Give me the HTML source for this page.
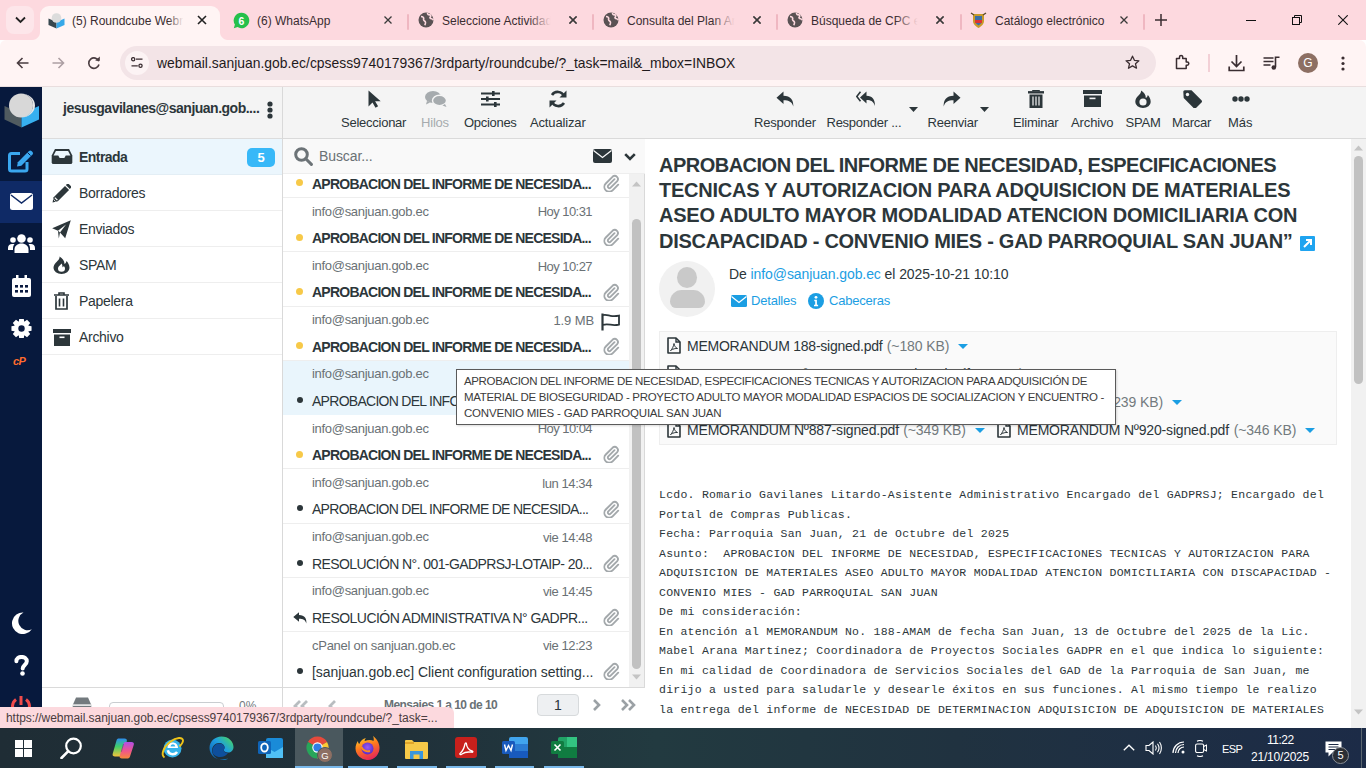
<!DOCTYPE html>
<html><head><meta charset="utf-8">
<style>
*{box-sizing:border-box;margin:0;padding:0}
html,body{width:1366px;height:768px;overflow:hidden;background:#fff;font-family:"Liberation Sans",sans-serif;color:#2c363a}
.a{position:absolute}
svg{display:block}
/* chrome */
#tabs{left:0;top:0;width:1366px;height:40px;background:#fdd9df}
.tab{top:6px;height:34px;width:185px;font-size:13px;color:#3b2c30}
.tab .t{position:absolute;left:32px;top:8px;white-space:nowrap;overflow:hidden;width:128px}
.tab .x{position:absolute;left:158px;top:9px}
#toolbar{left:0;top:40px;width:1366px;height:47px;background:#fff4f4;border-bottom:1px solid #e9dede;border-top-right-radius:7px;border-top-left-radius:6px}
#pill{left:120px;top:6px;width:1036px;height:34px;border-radius:17px;background:#f3e4e7}
#url{left:157px;top:15px;font-size:13.9px;color:#1f1a1c;white-space:nowrap}
.tt{top:14px;font-size:12px;color:#3a2d31;white-space:nowrap}
.tx{top:15px;width:10px;height:10px}
.sep{top:14px;width:2px;height:16px;background:#efb7c1;border-radius:1px}
.gl{top:12px;width:16px;height:16px}
.tbl{top:28px;font-size:13px;color:#2c363a;white-space:nowrap}
.row{left:0;width:346px;height:54.25px;border-bottom:1px solid #eeeeee;background:#fff}
.row.sel{background:#e9f5fc;border-bottom-color:#e9f5fc}
.from{left:29px;font-size:13px;color:#6a7175;letter-spacing:-0.3px;white-space:nowrap}
.date{right:37px;font-size:13px;color:#6a7175;letter-spacing:-0.55px;white-space:nowrap}
.subj{left:29px;font-size:14px;color:#2c363a;white-space:nowrap}
.dot{width:7px;height:7px;border-radius:50%}
/* app */
#side{left:0;top:87px;width:42px;height:641px;background:#07193d}
#fhead{left:42px;top:87px;width:240px;height:52px;background:#f4f4f4;border-bottom:1px solid #dcdcdc}
#fpanel{left:42px;top:87px;width:241px;height:641px;background:#fff;border-right:1px solid #d9d9d9}
#lpanel{left:283px;top:87px;width:362px;height:641px;background:#fff;border-right:1px solid #d9d9d9}
#cpanel{left:645px;top:87px;width:721px;height:641px;background:#fff}
.hdr{background:#f4f4f4;border-bottom:1px solid #dadada}
.folder{left:0;width:240px;height:36px;border-bottom:1px solid #eee;font-size:14px;letter-spacing:-0.3px;color:#2c363a}
.folder span{position:absolute;left:37px;top:10px}
.folder svg{position:absolute;left:9px;top:9px}
#status{left:0;top:707px;width:454px;height:21px;background:#fcd9de;border-top-right-radius:6px;font-size:12px;letter-spacing:-0.05px;color:#4a3c40;padding:4px 0 0 6px;white-space:nowrap}
#taskbar{left:0;top:728px;width:1366px;height:40px;background:linear-gradient(90deg,#1f2d35 0%,#20313a 30%,#223a40 48%,#203240 70%,#1c2b47 100%)}
</style></head><body>
<div id="tabs" class="a">
  <div class="a" style="left:6px;top:6px;width:28px;height:28px;border-radius:8px;background:#fde6ea"></div>
  <svg class="a" style="left:15px;top:16px" width="11" height="8" viewBox="0 0 11 8"><path d="M1 1.5 L5.5 6 L10 1.5" stroke="#222" stroke-width="1.8" fill="none"/></svg>
  <div class="a" style="left:40px;top:6px;width:180px;height:34px;background:#fff4f4;border-radius:9px 9px 0 0"></div>
  <div class="a" style="left:32px;top:32px;width:8px;height:8px;background:radial-gradient(circle at 0 0,#fdd9df 7.5px,#fff4f4 8.5px)"></div>
  <div class="a" style="left:220px;top:32px;width:8px;height:8px;background:radial-gradient(circle at 100% 0,#fdd9df 7.5px,#fff4f4 8.5px)"></div>
  <!-- roundcube icon -->
  <svg class="a" style="left:48px;top:12px" width="17" height="17" viewBox="0 0 17 17"><path d="M0.5 6.5 L8.5 10 L8.5 16.5 L0.5 13 Z" fill="#37474f"/><path d="M8.5 10 L16.5 6.5 L16.5 13 L8.5 16.5 Z" fill="#37a8e8"/><circle cx="8.5" cy="6" r="4.8" fill="#dcdcdc"/><path d="M0.5 6.5 L4 8 L8.5 10 L13 8 L16.5 6.5" fill="none"/></svg>
  <div class="a tt" style="left:72px">(5) Roundcube Webm</div>
  <div class="a" style="left:168px;top:10px;width:22px;height:20px;background:linear-gradient(90deg,rgba(255,244,244,0),#fff4f4 70%)"></div>
  <svg class="a tx" style="left:197px"><path d="M1 1L9 9M9 1L1 9" stroke="#222" stroke-width="1.6"/></svg>
  <!-- whatsapp -->
  <svg class="a" style="left:233px;top:12px" width="17" height="17" viewBox="0 0 17 17"><path d="M8.5 0.8a7.7 7.7 0 1 1-3.9 14.3L0.8 16.2l1.1-3.6A7.7 7.7 0 0 1 8.5 0.8z" fill="#25c04a"/><text x="8.5" y="12.5" font-size="10.5" font-weight="bold" text-anchor="middle" fill="#fff" font-family="Liberation Sans">6</text></svg>
  <div class="a tt" style="left:257px">(6) WhatsApp</div>
  <svg class="a tx" style="left:383px"><path d="M1.5 1.5L8.5 8.5M8.5 1.5L1.5 8.5" stroke="#3a3a3a" stroke-width="1.3"/></svg>
  <div class="a sep" style="left:407px"></div>
  <svg class="a gl" style="left:418px"><circle cx="8" cy="8" r="7.5" fill="#5a5254"/><path d="M3 4.5c2 0 3 1 2.6 2.6-.4 1.2.8 1.8 1.6 2.4.8.8.2 2.2-.4 3.8M9.5 1c0 1.5 1 2 2.5 1.8 1 .2 1 1.5.3 2.2-.8.8.2 1.6 1.2 1.8 1 .2 1.6.8 1.8 1.5" stroke="#fdd9df" stroke-width="1.6" fill="none"/></svg>
  <div class="a tt" style="left:442px">Seleccione Actividad a</div>
  <svg class="a tx" style="left:568px"><path d="M1.5 1.5L8.5 8.5M8.5 1.5L1.5 8.5" stroke="#3a3a3a" stroke-width="1.3"/></svg>
  <div class="a sep" style="left:592px"></div>
  <svg class="a gl" style="left:603px"><circle cx="8" cy="8" r="7.5" fill="#5a5254"/><path d="M3 4.5c2 0 3 1 2.6 2.6-.4 1.2.8 1.8 1.6 2.4.8.8.2 2.2-.4 3.8M9.5 1c0 1.5 1 2 2.5 1.8 1 .2 1 1.5.3 2.2-.8.8.2 1.6 1.2 1.8 1 .2 1.6.8 1.8 1.5" stroke="#fdd9df" stroke-width="1.6" fill="none"/></svg>
  <div class="a tt" style="left:627px">Consulta del Plan Anu</div>
  <svg class="a tx" style="left:752px"><path d="M1.5 1.5L8.5 8.5M8.5 1.5L1.5 8.5" stroke="#3a3a3a" stroke-width="1.3"/></svg>
  <div class="a sep" style="left:776px"></div>
  <svg class="a gl" style="left:787px"><circle cx="8" cy="8" r="7.5" fill="#5a5254"/><path d="M3 4.5c2 0 3 1 2.6 2.6-.4 1.2.8 1.8 1.6 2.4.8.8.2 2.2-.4 3.8M9.5 1c0 1.5 1 2 2.5 1.8 1 .2 1 1.5.3 2.2-.8.8.2 1.6 1.2 1.8 1 .2 1.6.8 1.8 1.5" stroke="#fdd9df" stroke-width="1.6" fill="none"/></svg>
  <div class="a tt" style="left:811px">Búsqueda de CPC en</div>
  <svg class="a tx" style="left:935px"><path d="M1.5 1.5L8.5 8.5M8.5 1.5L1.5 8.5" stroke="#3a3a3a" stroke-width="1.3"/></svg>
  <div class="a sep" style="left:960px"></div>
  <svg class="a" style="left:970px;top:11px" width="17" height="18" viewBox="0 0 17 18"><path d="M3 3h11v7c0 3.5-3 5.5-5.5 7C6 15.5 3 13.5 3 10z" fill="#c79a2a"/><path d="M5 5h7v5c0 2-1.8 3.4-3.5 4.4C6.8 13.4 5 12 5 10z" fill="#3b6ea5"/><rect x="5" y="9" width="7" height="3" fill="#d33"/><path d="M1 2l3 2M16 2l-3 2" stroke="#5a4a2a" stroke-width="1.4"/></svg>
  <div class="a tt" style="left:995px">Catálogo electrónico</div>
  <svg class="a tx" style="left:1119px"><path d="M1.5 1.5L8.5 8.5M8.5 1.5L1.5 8.5" stroke="#3a3a3a" stroke-width="1.3"/></svg>
  <div class="a sep" style="left:1143px"></div>
  <div class="a" style="left:528px;top:10px;width:38px;height:22px;background:linear-gradient(90deg,rgba(253,217,223,0),#fdd9df 60%)"></div>
  <div class="a" style="left:712px;top:10px;width:38px;height:22px;background:linear-gradient(90deg,rgba(253,217,223,0),#fdd9df 60%)"></div>
  <div class="a" style="left:895px;top:10px;width:38px;height:22px;background:linear-gradient(90deg,rgba(253,217,223,0),#fdd9df 60%)"></div>
  <svg class="a tx" style="left:568px"><path d="M1.5 1.5L8.5 8.5M8.5 1.5L1.5 8.5" stroke="#3a3a3a" stroke-width="1.3"/></svg>
  <svg class="a tx" style="left:752px"><path d="M1.5 1.5L8.5 8.5M8.5 1.5L1.5 8.5" stroke="#3a3a3a" stroke-width="1.3"/></svg>
  <svg class="a tx" style="left:935px"><path d="M1.5 1.5L8.5 8.5M8.5 1.5L1.5 8.5" stroke="#3a3a3a" stroke-width="1.3"/></svg>
  <svg class="a" style="left:1154px;top:13px" width="14" height="14" viewBox="0 0 14 14"><path d="M7 1v12M1 7h12" stroke="#3a2d31" stroke-width="1.5"/></svg>
  <svg class="a" style="left:1246px;top:20px" width="10" height="1" viewBox="0 0 10 1"><path d="M0 0.5h10" stroke="#111" stroke-width="1"/></svg>
  <svg class="a" style="left:1292px;top:15px" width="10" height="10" viewBox="0 0 10 10"><rect x="0.5" y="2.5" width="7" height="7" fill="none" stroke="#111" stroke-width="1"/><path d="M2.5 2.5V0.5h7v7h-2" fill="none" stroke="#111" stroke-width="1"/></svg>
  <svg class="a" style="left:1338px;top:15px" width="10" height="10" viewBox="0 0 10 10"><path d="M0.3 0.3l9.4 9.4M9.7 0.3l-9.4 9.4" stroke="#111" stroke-width="1.1"/></svg>
</div>
<div id="toolbar" class="a">
  <div id="pill" class="a"></div>
  <svg class="a" style="left:16px;top:17px" width="13" height="12" viewBox="0 0 13 12"><path d="M12.5 6H1.5M6.5 1L1.5 6l5 5" stroke="#4a3c40" stroke-width="1.6" fill="none"/></svg>
  <svg class="a" style="left:52px;top:17px" width="13" height="12" viewBox="0 0 13 12"><path d="M0.5 6H11.5M6.5 1l5 5-5 5" stroke="#ad9fa3" stroke-width="1.6" fill="none"/></svg>
  <svg class="a" style="left:87px;top:16px" width="14" height="14" viewBox="0 0 14 14"><path d="M11.8 5.2A5.2 5.2 0 1 0 12 8.5" stroke="#4a3c40" stroke-width="1.6" fill="none"/><path d="M8.2 4.8h4.6V0.5z" fill="#4a3c40"/></svg>
  <div class="a" style="left:125px;top:11px;width:24px;height:24px;border-radius:12px;background:#fcf3f4"></div>
  <svg class="a" style="left:131px;top:17px" width="12" height="12" viewBox="0 0 12 12"><circle cx="2.2" cy="2.2" r="1.6" stroke="#3a2d31" stroke-width="1.3" fill="none"/><path d="M5 2.2h6.5M0.5 8.8h6.3" stroke="#3a2d31" stroke-width="1.3"/><circle cx="9.5" cy="8.8" r="1.6" stroke="#3a2d31" stroke-width="1.3" fill="none"/></svg>
  <svg class="a" style="left:1125px;top:15px" width="15" height="15" viewBox="0 0 15 15"><path d="M7.5 1.2l1.9 4.1 4.5.5-3.4 3 1 4.4-4-2.3-4 2.3 1-4.4-3.4-3 4.5-.5z" stroke="#3a2d31" stroke-width="1.3" fill="none" stroke-linejoin="round"/></svg>
  <svg class="a" style="left:1175px;top:14px" width="16" height="16" viewBox="0 0 16 16"><path d="M1.5 4.5h3V3a1.6 1.6 0 0 1 3.2 0v1.5h3.5v3.5h1a1.6 1.6 0 0 1 0 3.2h-1v3.3h-9.7z" stroke="#3a2d31" stroke-width="1.5" fill="none" stroke-linejoin="round"/></svg>
  <div class="a" style="left:1208px;top:14px;width:2px;height:18px;background:#f3d0d6"></div>
  <svg class="a" style="left:1228px;top:14px" width="17" height="18" viewBox="0 0 17 18"><path d="M8.5 1v11M3.5 7.5l5 5 5-5M1.2 12.5v4h14.6v-4" stroke="#3a2d31" stroke-width="1.7" fill="none"/></svg>
  <svg class="a" style="left:1263px;top:16px" width="18" height="15" viewBox="0 0 18 15"><path d="M0.5 2h10M0.5 5.5h10M0.5 9h7" stroke="#3a2d31" stroke-width="1.5"/><path d="M12.5 11V1.2h4" stroke="#3a2d31" stroke-width="1.6" fill="none"/><circle cx="10.8" cy="11.5" r="2.3" fill="#3a2d31"/></svg>
  <div class="a" style="left:1298px;top:13px;width:20px;height:20px;border-radius:10px;background:#8d6f63;color:#fff;font-size:12px;text-align:center;line-height:20px">G</div>
  <svg class="a" style="left:1341px;top:16px" width="4" height="15" viewBox="0 0 4 15"><circle cx="2" cy="2" r="1.6" fill="#3a2d31"/><circle cx="2" cy="7.5" r="1.6" fill="#3a2d31"/><circle cx="2" cy="13" r="1.6" fill="#3a2d31"/></svg>
  <div id="url" class="a">webmail.sanjuan.gob.ec/cpsess9740179367/3rdparty/roundcube/?_task=mail&amp;_mbox=INBOX</div>
</div>
<div id="side" class="a">
  <!-- logo -->
  <svg class="a" style="left:4px;top:5px" width="36" height="36" viewBox="0 0 36 36"><path d="M0.5 14 L17.5 21.5 L17.5 35.5 L0.5 27.5 Z" fill="#505b60"/><path d="M17.5 21.5 L35 14 L35 27.5 L17.5 35.5 Z" fill="#37b0f0"/><circle cx="17" cy="13.5" r="12" fill="#d8d8d8"/><path d="M17 1.5a12 12 0 0 1 0 24a14 12 0 0 0 0-24z" fill="#e6e6e6"/></svg>
  <!-- compose -->
  <svg class="a" style="left:8px;top:62px" width="26" height="24" viewBox="0 0 26 24"><path d="M12 4.5H3.5a2 2 0 0 0-2 2V20a2 2 0 0 0 2 2h13.5a2 2 0 0 0 2-2v-7" stroke="#3aa7ef" stroke-width="3" fill="none"/><path d="M9 17.5l0.8-4.3L21 2a1.8 1.8 0 0 1 2.5 0l1 1a1.8 1.8 0 0 1 0 2.5L13.3 16.7z" fill="#3aa7ef"/><path d="M19.5 3.5l3 3" stroke="#0a1a40" stroke-width="1"/></svg>
  <div class="a" style="left:0;top:94px;width:42px;height:42px;background:#0f2a66"></div>
  <svg class="a" style="left:10px;top:106px" width="23" height="17" viewBox="0 0 23 17"><rect x="0" y="0" width="23" height="17" rx="2.5" fill="#fff"/><path d="M1 2 L11.5 10 L22 2" stroke="#0f2a66" stroke-width="1.5" fill="none"/></svg>
  <!-- contacts -->
  <svg class="a" style="left:8px;top:147px" width="27" height="19" viewBox="0 0 27 19"><circle cx="13.5" cy="4.5" r="4.3" fill="#fff"/><circle cx="5" cy="6" r="2.8" fill="#fff"/><circle cx="22" cy="6" r="2.8" fill="#fff"/><path d="M6.5 19v-3.5c0-3.5 3-6 7-6s7 2.5 7 6V19z" fill="#fff"/><path d="M0 16v-2c0-2.5 1.8-4 4-4h2.5c-1 1.2-1.5 2.6-1.5 4.5V16z" fill="#fff"/><path d="M27 16v-2c0-2.5-1.8-4-4-4h-2.5c1 1.2 1.5 2.6 1.5 4.5V16z" fill="#fff"/></svg>
  <!-- calendar -->
  <svg class="a" style="left:12px;top:188px" width="19" height="22" viewBox="0 0 19 22"><rect x="0" y="3" width="19" height="19" rx="2" fill="#fff"/><rect x="4" y="0" width="2.5" height="5" fill="#fff"/><rect x="12.5" y="0" width="2.5" height="5" fill="#fff"/><g fill="#0a1a40"><rect x="3" y="10" width="3" height="2.6"/><rect x="8" y="10" width="3" height="2.6"/><rect x="13" y="10" width="3" height="2.6"/><rect x="3" y="15" width="3" height="2.6"/><rect x="8" y="15" width="3" height="2.6"/><rect x="13" y="15" width="3" height="2.6"/></g></svg>
  <!-- gear -->
  <svg class="a" style="left:11px;top:232px" width="21" height="19" viewBox="0 0 21 19"><path d="M17.61 6.82 L20.55 7.25 L20.55 11.75 L17.61 12.18 L17.42 12.64 L19.20 15.02 L16.02 18.20 L13.64 16.42 L13.18 16.61 L12.75 19.55 L8.25 19.55 L7.82 16.61 L7.36 16.42 L4.98 18.20 L1.80 15.02 L3.58 12.64 L3.39 12.18 L0.45 11.75 L0.45 7.25 L3.39 6.82 L3.58 6.36 L1.80 3.98 L4.98 0.80 L7.36 2.58 L7.82 2.39 L8.25 -0.55 L12.75 -0.55 L13.18 2.39 L13.64 2.58 L16.02 0.80 L19.20 3.98 L17.42 6.36Z" fill="#fff"/><circle cx="10.5" cy="9.5" r="3.2" fill="#0a1a40"/></svg>
  <!-- cP -->
  <div class="a" style="left:13px;top:268px;font-size:11px;font-weight:bold;font-style:italic;color:#ff6c2c;letter-spacing:-0.5px">cP</div>
  <!-- moon -->
  <svg class="a" style="left:11px;top:525px" width="21" height="22" viewBox="0 0 21 22"><path d="M12.5 0.5A10.8 10.8 0 1 0 20.8 17.2 9 9 0 0 1 12.5 0.5z" fill="#fff"/></svg>
  <!-- help -->
  <svg class="a" style="left:14px;top:568px" width="15" height="21" viewBox="0 0 15 21"><path d="M2.4 6.2C2.4 3.4 4.6 1.9 7.5 1.9s5.3 1.7 5.3 4.3c0 3.6-4.1 3.8-4.1 7.3" stroke="#fff" stroke-width="4" fill="none" stroke-linecap="round"/><circle cx="8.5" cy="18.5" r="2.3" fill="#fff"/></svg>
  <!-- power -->
  <svg class="a" style="left:10px;top:608px" width="22" height="22" viewBox="0 0 22 22"><path d="M6 4.5a8.5 8.5 0 1 0 10 0" stroke="#f04b4b" stroke-width="3" fill="none"/><path d="M11 1v9" stroke="#f04b4b" stroke-width="3"/></svg>
</div>
<div id="fpanel" class="a">
  <div id="fhead" class="a" style="left:0;top:0"></div>
  <div class="a" style="left:21px;top:13px;font-size:14px;font-weight:bold;letter-spacing:-0.5px;color:#2c363a;white-space:nowrap">jesusgavilanes@sanjuan.gob....</div>
  <svg class="a" style="left:225px;top:14px" width="6" height="18" viewBox="0 0 6 18"><circle cx="3" cy="3" r="2.6" fill="#2c363a"/><circle cx="3" cy="9" r="2.6" fill="#2c363a"/><circle cx="3" cy="15" r="2.6" fill="#2c363a"/></svg>
  <div class="a folder" style="top:52px;background:#ebf6fd;border-bottom-color:#e3eef5"><svg width="22" height="15" viewBox="0 0 22 16" style="top:10px"><path d="M3.5 0h15l3.5 7v7a2 2 0 0 1-2 2H2a2 2 0 0 1-2-2V7z" fill="#2c363a"/><path d="M4.5 2h13l2.5 5h-5l-1.5 2.5h-5L7 7H2z" fill="#ebf6fd"/></svg><span style="font-weight:bold;letter-spacing:-0.55px">Entrada</span>
    <div class="a" style="left:205px;top:9px;width:28px;height:19px;border-radius:5px;background:#37b8f8;color:#fff;font-weight:bold;font-size:13px;text-align:center;line-height:19px">5</div></div>
  <div class="a folder" style="top:88px"><svg width="19" height="19" viewBox="0 0 19 19" style="left:10px"><path d="M0.5 18.5l1.2-5.3L13 1.9l4.1 4.1L5.8 17.3z" fill="#2c363a"/><path d="M13.8 1.1l1.2-1.0a1.3 1.3 0 0 1 1.8 0l2 2a1.3 1.3 0 0 1 0 1.8l-1 1.2z" fill="#2c363a"/><path d="M2.8 13.6l2.6 2.6" stroke="#fff" stroke-width="1.2"/><path d="M1.6 15.5l1.9 1.9" stroke="#fff" stroke-width="0.9"/></svg><span>Borradores</span></div>
  <div class="a folder" style="top:124px"><svg width="19" height="19" viewBox="0 0 19 19" style="left:10px"><path d="M18.8 0.2L0.2 8.2 6 10.8 14 4.5 8 12.5v0l5.2 5.8z" fill="#2c363a"/><path d="M6 10.8L8 12.5 6.8 18.5z" fill="#2c363a"/></svg><span>Enviados</span></div>
  <div class="a folder" style="top:160px"><svg width="17" height="18" viewBox="0 0 17 18" style="left:11px"><path d="M6.5 0.5C7 3 4.5 5 3 6.5 1.5 8 0.5 10 0.5 12a8 6 0 0 0 16 0c0-3-1.5-5.5-3-7-.3 1.5-1 2.5-2 3C11.5 5 9.5 2 6.5 0.5z" fill="#2c363a"/><path d="M8.5 7.5c-.5 1.5-3.5 2.5-3.5 5a3.5 3.3 0 0 0 7 0c0-1.2-.6-2-1.3-2.6-.2.8-.7 1.2-1.2 1.4C9.5 10 9.3 8.5 8.5 7.5z" fill="#fff"/></svg><span>SPAM</span></div>
  <div class="a folder" style="top:196px"><svg width="15" height="18" viewBox="0 0 15 18" style="left:12px"><path d="M0 3h15M5 3V1h5v2" stroke="#2c363a" stroke-width="1.6" fill="none"/><path d="M2 4v13h11V4" stroke="#2c363a" stroke-width="1.7" fill="none"/><path d="M5.5 6.5v8M9.5 6.5v8" stroke="#2c363a" stroke-width="1.6"/></svg><span>Papelera</span></div>
  <div class="a folder" style="top:232px"><svg width="18" height="17" viewBox="0 0 18 17" style="left:11px;top:10px"><rect x="0" y="0" width="18" height="4" fill="#2c363a"/><path d="M1 5.5h16V17H1z" fill="#2c363a"/><rect x="6.5" y="7.5" width="5" height="1.6" fill="#fff"/></svg><span>Archivo</span></div>
  <div class="a" style="left:0;top:600px;width:240px;height:41px;border-top:1px solid #dadada;background:#fff"></div>
  <svg class="a" style="left:30px;top:610px" width="20" height="14" viewBox="0 0 20 14"><path d="M4 0.5h12l3.5 8H0.5z" fill="#737a7e"/><rect x="0.5" y="9" width="19" height="5" rx="1" fill="#737a7e"/><path d="M1 8h18" stroke="#fff" stroke-width="1.2"/></svg>
  <div class="a" style="left:67px;top:615px;width:115px;height:18px;border:1px solid #c9cdd0;border-radius:4px;background:#fff"></div>
  <div class="a" style="left:197px;top:612px;font-size:12px;color:#737a7e">0%</div>
</div>
<div id="lpanel" class="a">
  <div class="a hdr" style="left:0;top:0;width:362px;height:52px"></div>
  <svg class="a" style="left:85px;top:3px" width="13" height="18" viewBox="0 0 13 18"><path d="M0.5 0.5v16l4-4 3 5.2 2.6-1.5-3-5h5.6z" fill="#2c363a"/></svg>
  <svg class="a" style="left:142px;top:4px" width="22" height="16" viewBox="0 0 22 16"><ellipse cx="8" cy="6" rx="8" ry="6" fill="#a6abae"/><path d="M2 10l-1 3.5 4-2z" fill="#a6abae"/><ellipse cx="14.5" cy="9.5" rx="7" ry="5.2" fill="#a6abae" stroke="#f4f4f4" stroke-width="1.4"/><path d="M20 13l1.5 3-4-1.5z" fill="#a6abae"/></svg>
  <svg class="a" style="left:198px;top:4px" width="19" height="16" viewBox="0 0 19 16"><path d="M0 2.5h19M0 8h19M0 13.5h19" stroke="#2c363a" stroke-width="2"/><rect x="11" y="0" width="2.6" height="5" fill="#2c363a"/><rect x="5" y="5.5" width="2.6" height="5" fill="#2c363a"/><rect x="13" y="11" width="2.6" height="5" fill="#2c363a"/></svg>
  <svg class="a" style="left:266px;top:3px" width="18" height="18" viewBox="0 0 18 18"><path d="M15 6.2A6.8 6.8 0 0 0 3 5" stroke="#2c363a" stroke-width="2.6" fill="none"/><path d="M17.5 0.5v7h-7z" fill="#2c363a"/><path d="M3 11.8A6.8 6.8 0 0 0 15 13" stroke="#2c363a" stroke-width="2.6" fill="none"/><path d="M0.5 17.5v-7h7z" fill="#2c363a"/></svg>
  <div class="a tbl" style="left:58px;letter-spacing:-0.25px">Seleccionar</div>
  <div class="a tbl" style="left:138px;color:#a6abae;letter-spacing:-0.2px">Hilos</div>
  <div class="a tbl" style="left:181px;letter-spacing:-0.3px">Opciones</div>
  <div class="a tbl" style="left:247px;letter-spacing:-0.15px">Actualizar</div>
  <div class="a" style="left:0;top:52px;width:362px;height:35px;background:#f9f9f9;border-bottom:1px solid #eee"></div>
  <svg class="a" style="left:11px;top:60px" width="19" height="19" viewBox="0 0 19 19"><circle cx="7.5" cy="7.5" r="5.8" stroke="#6c7377" stroke-width="3" fill="none"/><path d="M11.8 11.8l5.6 5.6" stroke="#6c7377" stroke-width="3" stroke-linecap="round"/></svg>
  <div class="a" style="left:36px;top:61px;font-size:14px;color:#6a7175;letter-spacing:-0.1px">Buscar...</div>
  <svg class="a" style="left:310px;top:62px" width="19" height="14" viewBox="0 0 19 14"><rect x="0" y="0" width="19" height="14" rx="2" fill="#2c363a"/><path d="M0.5 1.5L9.5 8.5 18.5 1.5" stroke="#f9f9f9" stroke-width="1.3" fill="none"/></svg>
  <svg class="a" style="left:341px;top:66px" width="12" height="8" viewBox="0 0 12 8"><path d="M1.2 1.2l4.8 4.8 4.8-4.8" stroke="#2c363a" stroke-width="2.6" fill="none"/></svg>
  <div class="a" style="left:0;top:87px;width:346px;height:513px;overflow:hidden">
    <div class="a row" style="top:-30.25px"></div>
    <div class="a dot" style="left:13px;top:5.45px;background:#f7c948"></div>
    <div class="a subj" style="top:1.75px;font-weight:bold;letter-spacing:-0.76px">APROBACION DEL INFORME DE NECESIDA...</div>
<svg class="a" style="left:320px;top:0.05px" width="17" height="18" viewBox="0 0 17 18"><path d="M11.5 5.2L5.3 11.4a1.6 1.6 0 0 0 2.3 2.3l6.6-6.6a3.2 3.2 0 0 0-4.5-4.5L2.8 9.5a4.8 4.8 0 0 0 6.8 6.8l5.6-5.6" stroke="#a3a8ab" stroke-width="1.9" fill="none" stroke-linecap="round"/></svg>
    <div class="a row" style="top:24.00px"></div>
    <div class="a from" style="top:29.50px">info@sanjuan.gob.ec</div>
    <div class="a date" style="top:30.30px">Hoy 10:31</div>
    <div class="a dot" style="left:13px;top:59.70px;background:#f7c948"></div>
    <div class="a subj" style="top:56.00px;font-weight:bold;letter-spacing:-0.76px">APROBACION DEL INFORME DE NECESIDA...</div>
<svg class="a" style="left:320px;top:54.30px" width="17" height="18" viewBox="0 0 17 18"><path d="M11.5 5.2L5.3 11.4a1.6 1.6 0 0 0 2.3 2.3l6.6-6.6a3.2 3.2 0 0 0-4.5-4.5L2.8 9.5a4.8 4.8 0 0 0 6.8 6.8l5.6-5.6" stroke="#a3a8ab" stroke-width="1.9" fill="none" stroke-linecap="round"/></svg>
    <div class="a row" style="top:78.25px"></div>
    <div class="a from" style="top:83.75px">info@sanjuan.gob.ec</div>
    <div class="a date" style="top:84.55px">Hoy 10:27</div>
    <div class="a dot" style="left:13px;top:113.95px;background:#f7c948"></div>
    <div class="a subj" style="top:110.25px;font-weight:bold;letter-spacing:-0.76px">APROBACION DEL INFORME DE NECESIDA...</div>
<svg class="a" style="left:320px;top:108.55px" width="17" height="18" viewBox="0 0 17 18"><path d="M11.5 5.2L5.3 11.4a1.6 1.6 0 0 0 2.3 2.3l6.6-6.6a3.2 3.2 0 0 0-4.5-4.5L2.8 9.5a4.8 4.8 0 0 0 6.8 6.8l5.6-5.6" stroke="#a3a8ab" stroke-width="1.9" fill="none" stroke-linecap="round"/></svg>
    <div class="a row" style="top:132.50px"></div>
    <div class="a from" style="top:138.00px">info@sanjuan.gob.ec</div>
    <div class="a date" style="top:138.80px;letter-spacing:-0.1px;right:35px">1.9 MB</div>
    <svg class="a" style="left:318px;top:138.50px" width="19" height="18" viewBox="0 0 19 18"><path d="M1.5 0.5v17" stroke="#2c363a" stroke-width="2.2"/><path d="M2 2.2c2.5-0.8 5 0.2 7.5 0.6s5 0.5 8.5-0.2v9c-3.5 0.8-6 0.6-8.5 0.1S4.5 11 2 11.8" stroke="#2c363a" stroke-width="1.8" fill="none"/></svg>
    <div class="a dot" style="left:13px;top:168.20px;background:#f7c948"></div>
    <div class="a subj" style="top:164.50px;font-weight:bold;letter-spacing:-0.76px">APROBACION DEL INFORME DE NECESIDA...</div>
<svg class="a" style="left:320px;top:162.80px" width="17" height="18" viewBox="0 0 17 18"><path d="M11.5 5.2L5.3 11.4a1.6 1.6 0 0 0 2.3 2.3l6.6-6.6a3.2 3.2 0 0 0-4.5-4.5L2.8 9.5a4.8 4.8 0 0 0 6.8 6.8l5.6-5.6" stroke="#a3a8ab" stroke-width="1.9" fill="none" stroke-linecap="round"/></svg>
    <div class="a row sel" style="top:186.75px"></div>
    <div class="a from" style="top:192.25px">info@sanjuan.gob.ec</div>
    <div class="a dot" style="left:14px;top:222.95px;width:6px;height:6px;background:#2c363a"></div>
    <div class="a subj" style="top:218.75px;font-weight:normal;letter-spacing:-0.72px">APROBACION DEL INFORME DE NECESIDA...</div>
    <div class="a row" style="top:241.00px"></div>
    <div class="a from" style="top:246.50px">info@sanjuan.gob.ec</div>
    <div class="a date" style="top:247.30px">Hoy 10:04</div>
    <div class="a dot" style="left:13px;top:276.70px;background:#f7c948"></div>
    <div class="a subj" style="top:273.00px;font-weight:bold;letter-spacing:-0.76px">APROBACION DEL INFORME DE NECESIDA...</div>
<svg class="a" style="left:320px;top:271.30px" width="17" height="18" viewBox="0 0 17 18"><path d="M11.5 5.2L5.3 11.4a1.6 1.6 0 0 0 2.3 2.3l6.6-6.6a3.2 3.2 0 0 0-4.5-4.5L2.8 9.5a4.8 4.8 0 0 0 6.8 6.8l5.6-5.6" stroke="#a3a8ab" stroke-width="1.9" fill="none" stroke-linecap="round"/></svg>
    <div class="a row" style="top:295.25px"></div>
    <div class="a from" style="top:300.75px">info@sanjuan.gob.ec</div>
    <div class="a date" style="top:301.55px;letter-spacing:-0.41px">lun 14:34</div>
    <div class="a dot" style="left:14px;top:331.45px;width:6px;height:6px;background:#2c363a"></div>
    <div class="a subj" style="top:327.25px;font-weight:normal;letter-spacing:-0.72px">APROBACION DEL INFORME DE NECESIDA...</div>
<svg class="a" style="left:320px;top:325.55px" width="17" height="18" viewBox="0 0 17 18"><path d="M11.5 5.2L5.3 11.4a1.6 1.6 0 0 0 2.3 2.3l6.6-6.6a3.2 3.2 0 0 0-4.5-4.5L2.8 9.5a4.8 4.8 0 0 0 6.8 6.8l5.6-5.6" stroke="#a3a8ab" stroke-width="1.9" fill="none" stroke-linecap="round"/></svg>
    <div class="a row" style="top:349.50px"></div>
    <div class="a from" style="top:355.00px">info@sanjuan.gob.ec</div>
    <div class="a date" style="top:355.80px;letter-spacing:-0.41px">vie 14:48</div>
    <div class="a dot" style="left:14px;top:385.70px;width:6px;height:6px;background:#2c363a"></div>
    <div class="a subj" style="top:381.50px;font-weight:normal;letter-spacing:-0.58px">RESOLUCIÓN N°. 001-GADPRSJ-LOTAIP- 20...</div>
<svg class="a" style="left:320px;top:379.80px" width="17" height="18" viewBox="0 0 17 18"><path d="M11.5 5.2L5.3 11.4a1.6 1.6 0 0 0 2.3 2.3l6.6-6.6a3.2 3.2 0 0 0-4.5-4.5L2.8 9.5a4.8 4.8 0 0 0 6.8 6.8l5.6-5.6" stroke="#a3a8ab" stroke-width="1.9" fill="none" stroke-linecap="round"/></svg>
    <div class="a row" style="top:403.75px"></div>
    <div class="a from" style="top:409.25px">info@sanjuan.gob.ec</div>
    <div class="a date" style="top:410.05px;letter-spacing:-0.41px">vie 14:45</div>
    <svg class="a" style="left:10px;top:437.75px" width="15" height="12" viewBox="0 0 15 12"><path d="M6 0.3L0.3 5 6 9.7V6.8c4 0 6.3 1 7.3 4.7.6-4.8-1.5-8.5-7.3-8.5z" fill="#2c363a"/></svg>
    <div class="a subj" style="top:435.75px;font-weight:normal;letter-spacing:-0.53px">RESOLUCIÓN ADMINISTRATIVA N° GADPR...</div>
<svg class="a" style="left:320px;top:434.05px" width="17" height="18" viewBox="0 0 17 18"><path d="M11.5 5.2L5.3 11.4a1.6 1.6 0 0 0 2.3 2.3l6.6-6.6a3.2 3.2 0 0 0-4.5-4.5L2.8 9.5a4.8 4.8 0 0 0 6.8 6.8l5.6-5.6" stroke="#a3a8ab" stroke-width="1.9" fill="none" stroke-linecap="round"/></svg>
    <div class="a row" style="top:458.00px;border-bottom:none"></div>
    <div class="a from" style="top:463.50px;letter-spacing:-0.27px">cPanel on sanjuan.gob.ec</div>
    <div class="a date" style="top:464.30px;letter-spacing:-0.41px">vie 12:23</div>
    <div class="a dot" style="left:14px;top:494.20px;width:6px;height:6px;background:#2c363a"></div>
    <div class="a subj" style="top:490.00px;font-weight:normal;letter-spacing:-0.04px">[sanjuan.gob.ec] Client configuration setting...</div>
<svg class="a" style="left:320px;top:488.30px" width="17" height="18" viewBox="0 0 17 18"><path d="M11.5 5.2L5.3 11.4a1.6 1.6 0 0 0 2.3 2.3l6.6-6.6a3.2 3.2 0 0 0-4.5-4.5L2.8 9.5a4.8 4.8 0 0 0 6.8 6.8l5.6-5.6" stroke="#a3a8ab" stroke-width="1.9" fill="none" stroke-linecap="round"/></svg>
  </div>
  <div class="a" style="left:346px;top:87px;width:15px;height:513px;background:#f1f1f1"></div>
  <svg class="a" style="left:349px;top:94px" width="9" height="6" viewBox="0 0 9 6"><path d="M0 5.5L4.5 0.5 9 5.5z" fill="#c4c4c4"/></svg>
  <div class="a" style="left:349px;top:132px;width:9px;height:450px;border-radius:5px;background:#c1c1c1"></div>
  <svg class="a" style="left:349px;top:587px" width="9" height="6" viewBox="0 0 9 6"><path d="M0 0.5L4.5 5.5 9 0.5z" fill="#c4c4c4"/></svg>
  <div class="a" style="left:0;top:600px;width:362px;height:41px;border-top:1px solid #dadada;background:#fff"></div>
  <svg class="a" style="left:10px;top:613px" width="16" height="12" viewBox="0 0 16 12"><path d="M7 1L2 6l5 5M14 1L9 6l5 5" stroke="#b8bdc0" stroke-width="2.8" fill="none"/></svg>
  <svg class="a" style="left:45px;top:613px" width="9" height="12" viewBox="0 0 9 12"><path d="M7 1L2 6l5 5" stroke="#b8bdc0" stroke-width="2.8" fill="none"/></svg>
  <div class="a" style="left:101px;top:611px;font-size:12px;font-weight:bold;color:#6a7175;letter-spacing:-0.55px;white-space:nowrap">Mensajes 1 a 10 de 10</div>
  <div class="a" style="left:254px;top:607px;width:42px;height:22px;border:1px solid #d7dadc;border-radius:4px;background:#eef0f2;font-size:14px;text-align:center;line-height:20px;color:#2c363a">1</div>
  <svg class="a" style="left:309px;top:612px" width="9" height="12" viewBox="0 0 9 12"><path d="M2 1l5 5-5 5" stroke="#9ba1a5" stroke-width="2.6" fill="none"/></svg>
  <svg class="a" style="left:337px;top:612px" width="16" height="12" viewBox="0 0 16 12"><path d="M2 1l5 5-5 5M9 1l5 5-5 5" stroke="#9ba1a5" stroke-width="2.6" fill="none"/></svg>
</div>
<div id="cpanel" class="a">
  <div class="a hdr" style="left:0;top:0;width:721px;height:52px"></div>
  <svg class="a" style="left:131px;top:4px" width="18" height="16" viewBox="0 0 18 16"><path d="M7.5 0.5L0.5 6.8 7.5 13V9.2c5.5 0 8.5 1.6 9.8 6.3.4-6.5-2.8-10.8-9.8-10.8z" fill="#2c363a"/></svg>
  <svg class="a" style="left:211px;top:4px" width="21" height="16" viewBox="0 0 21 16"><path d="M4.5 0.8L0.8 5.5 4.5 10.2" stroke="#2c363a" stroke-width="1.6" fill="none"/><path d="M10.5 0.5L4 6.5 10.5 12.5V9c4.5 0 7.2 1.6 8.4 6 .4-6.2-2.6-10.3-8.4-10.3z" fill="#2c363a"/></svg>
  <svg class="a" style="left:298px;top:4px" width="18" height="16" viewBox="0 0 18 16"><path d="M10.5 0.5L17.5 6.8 10.5 13V9.2C5 9.2 2 10.8 0.7 15.5.3 9 3.5 4.7 10.5 4.7z" fill="#2c363a"/></svg>
  <svg class="a" style="left:264px;top:20px" width="9" height="5" viewBox="0 0 9 5"><path d="M0 0h9L4.5 5z" fill="#2c363a"/></svg>
  <svg class="a" style="left:335px;top:20px" width="9" height="5" viewBox="0 0 9 5"><path d="M0 0h9L4.5 5z" fill="#2c363a"/></svg>
  <svg class="a" style="left:383px;top:3px" width="16" height="18" viewBox="0 0 16 18"><path d="M0 2.3h16" stroke="#2c363a" stroke-width="2.4"/><path d="M5 1.2V0.2h6v1" stroke="#2c363a" stroke-width="1.6" fill="none"/><path d="M1.5 4.5h13V18h-13z" fill="#2c363a"/><path d="M5 6.5v9M8 6.5v9M11 6.5v9" stroke="#f4f4f4" stroke-width="1.2"/></svg>
  <svg class="a" style="left:438px;top:3px" width="19" height="17" viewBox="0 0 19 17"><rect x="0" y="0" width="19" height="4" fill="#2c363a"/><path d="M1 5.5h17V17H1z" fill="#2c363a"/><rect x="6.5" y="7.6" width="6" height="1.6" fill="#f4f4f4"/></svg>
  <svg class="a" style="left:490px;top:3px" width="16" height="18" viewBox="0 0 16 18"><path d="M6 0.5C6.5 3 4 5 2.5 6.5 1 8 0.3 10 0.3 12a7.7 6 0 0 0 15.4 0c0-3-1.4-5.5-2.9-7-.3 1.5-1 2.5-2 3C11 5 9 2 6 0.5z" fill="#2c363a"/><circle cx="8" cy="12" r="3.6" fill="#f4f4f4"/></svg>
  <svg class="a" style="left:538px;top:3px" width="19" height="18" viewBox="0 0 19 18"><path d="M0.3 1.8A1.5 1.5 0 0 1 1.8 0.3H8.5l10 10a1.6 1.6 0 0 1 0 2.2l-5.6 5.6a1.6 1.6 0 0 1-2.2 0l-10-10z" fill="#2c363a"/><circle cx="4.5" cy="4.5" r="1.7" fill="#f4f4f4"/></svg>
  <svg class="a" style="left:587px;top:9px" width="18" height="6" viewBox="0 0 18 6"><circle cx="3" cy="3" r="2.7" fill="#2c363a"/><circle cx="9" cy="3" r="2.7" fill="#2c363a"/><circle cx="15" cy="3" r="2.7" fill="#2c363a"/></svg>
  <div class="a tbl" style="left:109.0px;letter-spacing:-0.2px">Responder</div>
  <div class="a tbl" style="left:181.5px;letter-spacing:-0.25px">Responder ...</div>
  <div class="a tbl" style="left:282.5px;letter-spacing:-0.2px">Reenviar</div>
  <div class="a tbl" style="left:368.1px;letter-spacing:-0.2px">Eliminar</div>
  <div class="a tbl" style="left:426.1px;letter-spacing:-0.15px">Archivo</div>
  <div class="a tbl" style="left:480.5px;letter-spacing:-0.2px">SPAM</div>
  <div class="a tbl" style="left:527.0px;letter-spacing:-0.2px">Marcar</div>
  <div class="a tbl" style="left:583.1px;letter-spacing:-0.1px">Más</div>
  <div class="a" style="left:0;top:52px;width:721px;height:589px;background:#fff;overflow:hidden">
    <div class="a" style="left:14px;top:15.0px;font-size:20px;font-weight:bold;color:#2c363a;letter-spacing:-0.51px;white-space:nowrap">APROBACION DEL INFORME DE NECESIDAD, ESPECIFICACIONES</div>
    <div class="a" style="left:14px;top:40.2px;font-size:20px;font-weight:bold;color:#2c363a;letter-spacing:-0.23px;white-space:nowrap">TECNICAS Y AUTORIZACION PARA ADQUISICION DE MATERIALES</div>
    <div class="a" style="left:14px;top:65.4px;font-size:20px;font-weight:bold;color:#2c363a;letter-spacing:-0.23px;white-space:nowrap">ASEO ADULTO MAYOR MODALIDAD ATENCION DOMICILIARIA CON</div>
    <div class="a" style="left:14px;top:90.6px;font-size:20px;font-weight:bold;color:#2c363a;letter-spacing:-0.28px;white-space:nowrap">DISCAPACIDAD - CONVENIO MIES - GAD PARROQUIAL SAN JUAN”</div>
    <svg class="a" style="left:655px;top:97px" width="15" height="15" viewBox="0 0 15 15"><rect width="15" height="15" rx="1" fill="#1fa4f0"/><path d="M4 11L11 4M6 4h5v5" stroke="#fff" stroke-width="2" fill="none"/></svg>
    <div class="a" style="left:14px;top:122px;width:56px;height:56px;border-radius:50%;background:#f1f1f1;overflow:hidden"><div class="a" style="left:18px;top:6px;width:20px;height:21px;border-radius:50%;background:#c9c9c9"></div><div class="a" style="left:10.5px;top:29px;width:35px;height:18px;border-radius:13px 13px 7px 7px;background:#c9c9c9"></div></div>
    <div class="a" style="left:84px;top:127px;font-size:14px;color:#2c363a;white-space:nowrap;letter-spacing:-0.08px">De <span style="color:#1b9ee3">info@sanjuan.gob.ec</span> el 2025-10-21 10:10</div>
    <svg class="a" style="left:86px;top:156px" width="16" height="12" viewBox="0 0 16 12"><rect width="16" height="12" rx="1.5" fill="#1b9ee3"/><path d="M0.5 1.5L8 7.5 15.5 1.5" stroke="#fff" stroke-width="1.3" fill="none"/></svg>
    <div class="a" style="left:106px;top:153.5px;font-size:13px;color:#1b9ee3;white-space:nowrap;letter-spacing:-0.2px">Detalles</div>
    <svg class="a" style="left:163px;top:154px" width="16" height="16" viewBox="0 0 16 16"><circle cx="8" cy="8" r="8" fill="#1b9ee3"/><circle cx="8" cy="4.3" r="1.4" fill="#fff"/><path d="M6.3 6.8h2.6v5h1.2v1.4H6v-1.4h1.2V8.2h-.9z" fill="#fff"/></svg>
    <div class="a" style="left:184px;top:153.5px;font-size:13px;color:#1b9ee3;white-space:nowrap;letter-spacing:-0.2px">Cabeceras</div>
    <div class="a" style="left:14px;top:192px;width:678px;height:114px;border:1px solid #eeeeee;background:#fafafa"></div>
    <svg class="a" style="left:22px;top:197.5px" width="14" height="17" viewBox="0 0 14 17"><path d="M1 1h8l4 4v11H1z" stroke="#2c363a" stroke-width="1.6" fill="none" stroke-linejoin="round"/><path d="M9 1v4h4" stroke="#2c363a" stroke-width="1.4" fill="none"/><path d="M3.5 13.5c1.5-1 3-4 3.5-7 .3 2.5 2 4.5 3.5 5-2-.2-4.5.3-7 2z" stroke="#2c363a" stroke-width="1" fill="none"/></svg>
    <div class="a" style="left:42px;top:199.0px;font-size:14px;color:#2c363a;white-space:nowrap;letter-spacing:-0.24px">MEMORANDUM 188-signed.pdf</div>
    <div class="a" style="left:241.79999999999995px;top:199.0px;font-size:14px;color:#737a7e;white-space:nowrap;letter-spacing:-0.1px">(~180 KB)</div>
    <svg class="a" style="left:312.5px;top:204.5px" width="10" height="5" viewBox="0 0 10 5"><path d="M0 0h10L5 5z" fill="#1b9ee3"/></svg>
    <svg class="a" style="left:22px;top:225.60000000000002px" width="14" height="17" viewBox="0 0 14 17"><path d="M1 1h8l4 4v11H1z" stroke="#2c363a" stroke-width="1.6" fill="none" stroke-linejoin="round"/><path d="M9 1v4h4" stroke="#2c363a" stroke-width="1.4" fill="none"/><path d="M3.5 13.5c1.5-1 3-4 3.5-7 .3 2.5 2 4.5 3.5 5-2-.2-4.5.3-7 2z" stroke="#2c363a" stroke-width="1" fill="none"/></svg>
    <div class="a" style="left:42px;top:227.10000000000002px;font-size:14px;color:#2c363a;white-space:nowrap;letter-spacing:-0.24px">MEMORANDUM Nº 891-GADPRSJ-signed.pdf</div>
    <div class="a" style="left:316px;top:227.10000000000002px;font-size:14px;color:#737a7e;white-space:nowrap;letter-spacing:-0.1px">(~245 KB)</div>
    <svg class="a" style="left:386px;top:232.60000000000002px" width="10" height="5" viewBox="0 0 10 5"><path d="M0 0h10L5 5z" fill="#1b9ee3"/></svg>
    <svg class="a" style="left:22px;top:253.7px" width="14" height="17" viewBox="0 0 14 17"><path d="M1 1h8l4 4v11H1z" stroke="#2c363a" stroke-width="1.6" fill="none" stroke-linejoin="round"/><path d="M9 1v4h4" stroke="#2c363a" stroke-width="1.4" fill="none"/><path d="M3.5 13.5c1.5-1 3-4 3.5-7 .3 2.5 2 4.5 3.5 5-2-.2-4.5.3-7 2z" stroke="#2c363a" stroke-width="1" fill="none"/></svg>
    <div class="a" style="left:42px;top:255.2px;font-size:14px;color:#2c363a;white-space:nowrap;letter-spacing:-0.24px">RESOLUCION ADMINISTRATIVA Nº 050-GADPRSJ-2025-signed.pdf</div>
    <div class="a" style="left:455.5px;top:255.2px;font-size:14px;color:#737a7e;white-space:nowrap;letter-spacing:-0.1px">(~239 KB)</div>
    <svg class="a" style="left:526.5px;top:260.7px" width="10" height="5" viewBox="0 0 10 5"><path d="M0 0h10L5 5z" fill="#1b9ee3"/></svg>
    <svg class="a" style="left:22px;top:281.8px" width="14" height="17" viewBox="0 0 14 17"><path d="M1 1h8l4 4v11H1z" stroke="#2c363a" stroke-width="1.6" fill="none" stroke-linejoin="round"/><path d="M9 1v4h4" stroke="#2c363a" stroke-width="1.4" fill="none"/><path d="M3.5 13.5c1.5-1 3-4 3.5-7 .3 2.5 2 4.5 3.5 5-2-.2-4.5.3-7 2z" stroke="#2c363a" stroke-width="1" fill="none"/></svg>
    <div class="a" style="left:42px;top:283.3px;font-size:14px;color:#2c363a;white-space:nowrap;letter-spacing:-0.18px">MEMORANDUM Nº887-signed.pdf</div>
    <div class="a" style="left:258.20000000000005px;top:283.3px;font-size:14px;color:#737a7e;white-space:nowrap;letter-spacing:-0.1px">(~349 KB)</div>
    <svg class="a" style="left:329.5px;top:288.8px" width="10" height="5" viewBox="0 0 10 5"><path d="M0 0h10L5 5z" fill="#1b9ee3"/></svg>
    <svg class="a" style="left:352px;top:281.8px" width="14" height="17" viewBox="0 0 14 17"><path d="M1 1h8l4 4v11H1z" stroke="#2c363a" stroke-width="1.6" fill="none" stroke-linejoin="round"/><path d="M9 1v4h4" stroke="#2c363a" stroke-width="1.4" fill="none"/><path d="M3.5 13.5c1.5-1 3-4 3.5-7 .3 2.5 2 4.5 3.5 5-2-.2-4.5.3-7 2z" stroke="#2c363a" stroke-width="1" fill="none"/></svg>
    <div class="a" style="left:372px;top:283.3px;font-size:14px;color:#2c363a;white-space:nowrap;letter-spacing:-0.18px">MEMORANDUM Nº920-signed.pdf</div>
    <div class="a" style="left:588.7px;top:283.3px;font-size:14px;color:#737a7e;white-space:nowrap;letter-spacing:-0.1px">(~346 KB)</div>
    <svg class="a" style="left:659.5px;top:288.8px" width="10" height="5" viewBox="0 0 10 5"><path d="M0 0h10L5 5z" fill="#1b9ee3"/></svg>
    <div class="a" style="left:14px;top:346px;font-family:'Liberation Mono',monospace;font-size:11.5px;letter-spacing:0.25px;line-height:19.5px;color:#2c363a;white-space:pre">Lcdo. Romario Gavilanes Litardo-Asistente Administrativo Encargado del GADPRSJ; Encargado del
Portal de Compras Publicas.
Fecha: Parroquia San Juan, 21 de Octubre del 2025
Asunto:  APROBACION DEL INFORME DE NECESIDAD, ESPECIFICACIONES TECNICAS Y AUTORIZACION PARA
ADQUISICION DE MATERIALES ASEO ADULTO MAYOR MODALIDAD ATENCION DOMICILIARIA CON DISCAPACIDAD -
CONVENIO MIES - GAD PARROQUIAL SAN JUAN
De mi consideración:
En atención al MEMORANDUM No. 188-AMAM de fecha San Juan, 13 de Octubre del 2025 de la Lic.
Mabel Arana Martínez; Coordinadora de Proyectos Sociales GADPR en el que indica lo siguiente:
En mi calidad de Coordinadora de Servicios Sociales del GAD de la Parroquia de San Juan, me
dirijo a usted para saludarle y desearle éxitos en sus funciones. Al mismo tiempo le realizo
la entrega del informe de NECESIDAD DE DETERMINACION ADQUISICION DE ADQUISICION DE MATERIALES</div>
  </div>
  <div class="a" style="left:706px;top:52px;width:15px;height:589px;background:#f1f1f1"></div>
  <svg class="a" style="left:709px;top:58px" width="9" height="6" viewBox="0 0 9 6"><path d="M0 5.5L4.5 0.5 9 5.5z" fill="#c4c4c4"/></svg>
  <div class="a" style="left:709px;top:69px;width:9px;height:228px;border-radius:5px;background:#c1c1c1"></div>
  <svg class="a" style="left:709px;top:622px" width="9" height="6" viewBox="0 0 9 6"><path d="M0 0.5L4.5 5.5 9 0.5z" fill="#c4c4c4"/></svg>
</div>
<div class="a" style="left:456px;top:369px;width:660px;height:56px;border:1px solid #5a5a5a;background:#fff;box-shadow:1px 1px 2px rgba(0,0,0,0.15)"></div>
<div class="a" style="left:464px;top:375px;font-size:11.5px;color:#3c3c3c;white-space:nowrap;letter-spacing:-0.36px">APROBACION DEL INFORME DE NECESIDAD, ESPECIFICACIONES TECNICAS Y AUTORIZACION PARA ADQUISICIÓN DE</div>
<div class="a" style="left:464px;top:391px;font-size:11.5px;color:#3c3c3c;white-space:nowrap;letter-spacing:-0.32px">MATERIAL DE BIOSEGURIDAD - PROYECTO ADULTO MAYOR MODALIDAD ESPACIOS DE SOCIALIZACION Y ENCUENTRO -</div>
<div class="a" style="left:464px;top:407px;font-size:11.5px;color:#3c3c3c;white-space:nowrap;letter-spacing:-0.2px">CONVENIO MIES - GAD PARROQUIAL SAN JUAN</div>
<div id="status" class="a">https://webmail.sanjuan.gob.ec/cpsess9740179367/3rdparty/roundcube/?_task=...</div>
<div id="taskbar" class="a">
  <svg class="a" style="left:15px;top:12px" width="17" height="17" viewBox="0 0 17 17"><rect x="0" y="0" width="8" height="8" fill="#fff"/><rect x="9" y="0" width="8" height="8" fill="#fff"/><rect x="0" y="9" width="8" height="8" fill="#fff"/><rect x="9" y="9" width="8" height="8" fill="#fff"/></svg>
  <svg class="a" style="left:60px;top:9px" width="23" height="22" viewBox="0 0 23 22"><circle cx="13.5" cy="9" r="7.3" stroke="#fff" stroke-width="2.2" fill="none"/><path d="M8.3 14.2L1.5 21" stroke="#fff" stroke-width="2.6" stroke-linecap="round"/></svg>
  <svg class="a" style="left:112px;top:10px" width="23" height="21" viewBox="0 0 23 21"><defs><linearGradient id="cg1" x1="0" y1="0" x2="0" y2="1"><stop offset="0" stop-color="#2d8ef0"/><stop offset="0.45" stop-color="#3fcf6a"/><stop offset="1" stop-color="#f6c33a"/></linearGradient><linearGradient id="cg2" x1="0" y1="0" x2="0" y2="1"><stop offset="0" stop-color="#b04ee8"/><stop offset="0.55" stop-color="#f0568a"/><stop offset="1" stop-color="#f7893a"/></linearGradient></defs><path d="M7 0.5h5.5c1.8 0 2.8 1 2.3 2.8L11 16.5c-.4 1.4-1.5 2-2.8 2H3c-1.8 0-2.8-1-2.3-2.8L4.5 2.5C4.9 1.1 5.7 0.5 7 0.5z" fill="url(#cg1)"/><path d="M14 4h5.5c1.8 0 2.8 1 2.3 2.8L18 18.5c-.4 1.4-1.5 2-2.8 2H10c-1.8 0-2.8-1-2.3-2.8L11.5 6C11.9 4.6 12.7 4 14 4z" fill="url(#cg2)"/><path d="M11.5 6L9.3 13.8" stroke="#2a2f60" stroke-width="0.8" opacity="0.5"/></svg>
  <svg class="a" style="left:160px;top:8px" width="24" height="23" viewBox="0 0 24 23"><circle cx="12.5" cy="12.5" r="9" fill="#35b4ea"/><path d="M7.5 12h10.5c0-3.3-2.3-5.5-5.2-5.5S7.5 8.7 7.5 12zm3-1.6c.4-1.4 1.2-2.2 2.4-2.2s2 .8 2.4 2.2z" fill="#fff" fill-rule="evenodd"/><path d="M7.8 14.3c.6 2.4 2.5 3.9 5 3.9 2 0 3.4-.9 4.3-2.2" stroke="#fff" stroke-width="2.6" fill="none"/><path d="M4.5 21.5C.5 19 3.5 11 10 6s13-5 13-1.5c0 1.8-1.5 4-3.5 6" stroke="#f0c419" stroke-width="1.9" fill="none"/></svg>
  <svg class="a" style="left:209px;top:8px" width="25" height="24" viewBox="0 0 25 24"><defs><linearGradient id="eg1" x1="0" y1="1" x2="1" y2="0"><stop offset="0" stop-color="#0b56a8"/><stop offset="0.55" stop-color="#1e9de3"/><stop offset="0.8" stop-color="#36c38f"/><stop offset="1" stop-color="#7ad65a"/></linearGradient></defs><path d="M12.5 0.5C19.5 0.5 24.5 5.5 24.5 11c0 3.5-2.5 5.5-5.5 5.5-2.5 0-4.2-1-4.2-2.5 0-.8.8-1.2.8-2.5 0-2.5-2.5-4.5-5.5-4.5-4 0-7 3.3-7 7.5 0 5.5 5 9.5 10.5 9.5 2 0 4-.4 5.5-1.3C16.5 22.5 14.5 23.5 12 23.5 5.5 23.5 0.5 18 0.5 12 0.5 5.5 5.8 0.5 12.5 0.5z" fill="url(#eg1)"/><path d="M3.5 15c0-4 3-7.5 7-7.5 3 0 5 2 5 4.5 0 1-.8 1.5-.8 2.5 0 1.5 1.8 2.5 4.2 2.5-1.5 2.5-4.5 4-7.5 4C6.5 21 3.5 18.5 3.5 15z" fill="#0e4f9c"/></svg>
  <svg class="a" style="left:258px;top:9px" width="25" height="22" viewBox="0 0 25 22"><rect x="8" y="1" width="17" height="20" rx="2" fill="#1a8bd8"/><path d="M8 10l8.5 5L25 10v11H8z" fill="#50c0f5"/><rect x="0" y="4" width="13" height="13" rx="1.5" fill="#0f64b8"/><ellipse cx="6.5" cy="10.5" rx="3.3" ry="4" stroke="#fff" stroke-width="1.8" fill="none"/></svg>
  <div class="a" style="left:295px;top:0;width:48px;height:40px;background:#4a585e"></div>
  <svg class="a" style="left:306px;top:8px" width="27" height="26" viewBox="0 0 27 26"><path d="M11.50 11.50 L1.97 6.00 A11 11 0 0 1 21.03 6.00 Z" fill="#e64a3c"/><path d="M11.50 11.50 L21.03 6.00 A11 11 0 0 1 11.50 22.50 Z" fill="#fcc934"/><path d="M11.50 11.50 L11.50 22.50 A11 11 0 0 1 1.97 6.00 Z" fill="#27a55a"/><circle cx="11.5" cy="11.5" r="5.2" fill="#fff"/><circle cx="11.5" cy="11.5" r="4.1" fill="#2f7ee6"/><circle cx="19" cy="19" r="7.5" fill="#8d6f63" stroke="#4a585e" stroke-width="1"/><text x="19" y="22.5" font-size="9.5" text-anchor="middle" fill="#fff" font-family="Liberation Sans">G</text></svg>
  <svg class="a" style="left:355px;top:7px" width="25" height="25" viewBox="0 0 25 25"><defs><linearGradient id="ffg" x1="0.2" y1="0" x2="0.6" y2="1"><stop offset="0" stop-color="#ffcf2e"/><stop offset="0.45" stop-color="#ff7b1c"/><stop offset="1" stop-color="#e5255b"/></linearGradient><radialGradient id="ffp" cx="0.5" cy="0.4" r="0.6"><stop offset="0" stop-color="#9a5cf2"/><stop offset="1" stop-color="#5b2bc8"/></radialGradient></defs><path d="M18 1c3.5 2.5 6.5 7 6.5 11.5A12 12 0 0 1 0.5 13.5c0-3 1-5.5 2.5-7.5 0 1.5.5 2.5 1.3 3C5.5 5.5 8 3.5 11 3c-1 1-1.5 2-1.3 3C13 4.5 16.5 4.5 18.5 6c.5-1.8.3-3.5-.5-5z" fill="url(#ffg)"/><circle cx="12.5" cy="13.5" r="6" fill="url(#ffp)"/><path d="M6.5 12c1.5 3.5 5 5 8.5 4" stroke="#ff8a1f" stroke-width="2" fill="none"/></svg>
  <svg class="a" style="left:405px;top:10.5px" width="23" height="20" viewBox="0 0 23 20"><path d="M0 2a1 1 0 0 1 1-1h6l2 2h13a1 1 0 0 1 1 1v15a1 1 0 0 1-1 1H1a1 1 0 0 1-1-1z" fill="#f7c948"/><rect x="0" y="3" width="9" height="2" fill="#e0a52a"/><path d="M5 12h13v8h-3.5v-4.5h-6V20H5z" fill="#3a96dd"/></svg>
  <svg class="a" style="left:455px;top:9px" width="22" height="21" viewBox="0 0 22 21"><rect width="22" height="21" rx="3" fill="#c8201c"/><path d="M5 16.5c2-1.5 4-5 5-9.5.3-1.5 1.5-1.5 1.5 0 0 3 2.5 6.5 5.5 7 1.5.3 1 1.5-.5 1.2-3-.5-7 0-10 2-1 .8-2 0-1.5-.7z" stroke="#fff" stroke-width="1.3" fill="none"/></svg>
  <svg class="a" style="left:502px;top:9px" width="26" height="21" viewBox="0 0 26 21"><rect x="7" y="0" width="19" height="21" rx="2" fill="#41a5ee"/><rect x="7" y="7" width="19" height="7" fill="#2b7cd3"/><rect x="7" y="14" width="19" height="7" fill="#185abd"/><rect x="0" y="4" width="13" height="13" rx="1.5" fill="#185abd"/><path d="M2.5 7.5l1.5 6 2.5-5 2.5 5 1.5-6" stroke="#fff" stroke-width="1.4" fill="none"/></svg>
  <svg class="a" style="left:551px;top:9px" width="26" height="21" viewBox="0 0 26 21"><rect x="7" y="0" width="19" height="21" rx="2" fill="#21a366"/><rect x="16" y="0" width="10" height="10" fill="#33c481"/><rect x="7" y="10" width="19" height="11" fill="#107c41"/><rect x="0" y="4" width="13" height="13" rx="1.5" fill="#107c41"/><path d="M3.5 7.5l6 6M9.5 7.5l-6 6" stroke="#fff" stroke-width="1.6"/></svg>
  <div class="a" style="left:295px;top:38px;width:48px;height:2px;background:#79b8ea"></div>
  <div class="a" style="left:348px;top:38px;width:40px;height:2px;background:#79b8ea"></div>
  <div class="a" style="left:397px;top:38px;width:40px;height:2px;background:#79b8ea"></div>
  <div class="a" style="left:446px;top:38px;width:40px;height:2px;background:#79b8ea"></div>
  <div class="a" style="left:495px;top:38px;width:39px;height:2px;background:#79b8ea"></div>
  <div class="a" style="left:544px;top:38px;width:40px;height:2px;background:#79b8ea"></div>
  <svg class="a" style="left:1123px;top:16px" width="12" height="7" viewBox="0 0 12 7"><path d="M0.8 6.3L6 1.2l5.2 5.1" stroke="#fff" stroke-width="1.3" fill="none"/></svg>
  <svg class="a" style="left:1145px;top:13px" width="17" height="14" viewBox="0 0 17 14"><path d="M1 4.5h3l4-3.5v12l-4-3.5H1z" stroke="#fff" stroke-width="1.1" fill="none"/><path d="M10.5 4.5c1 1.5 1 3.5 0 5M12.5 2.8c1.8 2.5 1.8 6 0 8.5M14.5 1c2.5 3.5 2.5 8.5 0 12" stroke="#fff" stroke-width="1.1" fill="none"/></svg>
  <svg class="a" style="left:1172px;top:13px" width="13" height="13" viewBox="0 0 13 13"><path d="M1 12a11 11 0 0 1 11-11M3.5 12a8.5 8.5 0 0 1 8.5-8.5M6 12a6 6 0 0 1 6-6" stroke="#fff" stroke-width="1.2" fill="none"/><circle cx="11" cy="11" r="1.5" fill="#fff"/></svg>
  <svg class="a" style="left:1195px;top:12px" width="12" height="17" viewBox="0 0 12 17"><rect x="0.6" y="4" width="8" height="8.5" rx="1.5" stroke="#fff" stroke-width="1.1" fill="none"/><path d="M8.6 6.5l3-1.5v6l-3-1.5" stroke="#fff" stroke-width="1.1" fill="none"/><path d="M2 1.2a7 7 0 0 1 6 0M2 15.8a7 7 0 0 0 6 0" stroke="#fff" stroke-width="1.1" fill="none"/></svg>
  <div class="a" style="left:1222px;top:15px;font-size:11px;color:#fff;letter-spacing:-0.6px">ESP</div>
  <div class="a" style="left:1267px;top:5px;font-size:12px;color:#fff;letter-spacing:-0.5px">11:22</div>
  <div class="a" style="left:1251px;top:22px;font-size:12px;color:#fff;letter-spacing:-0.2px">21/10/2025</div>
  <svg class="a" style="left:1325px;top:13px" width="17" height="16" viewBox="0 0 17 16"><path d="M0.5 0.5h16v11h-9l-4 4v-4h-3z" fill="#fff"/><path d="M3.5 3.5h10M3.5 6h10M3.5 8.5h7" stroke="#1c2a45" stroke-width="1"/></svg>
  <div class="a" style="left:1332px;top:19px;width:17px;height:17px;border-radius:50%;background:#2a2e35;border:1px solid #8a8f96;color:#fff;font-size:11px;text-align:center;line-height:15px">5</div>
  <div class="a" style="left:1361px;top:0;width:1px;height:40px;background:#5a6670"></div>
</div>
</body></html>
